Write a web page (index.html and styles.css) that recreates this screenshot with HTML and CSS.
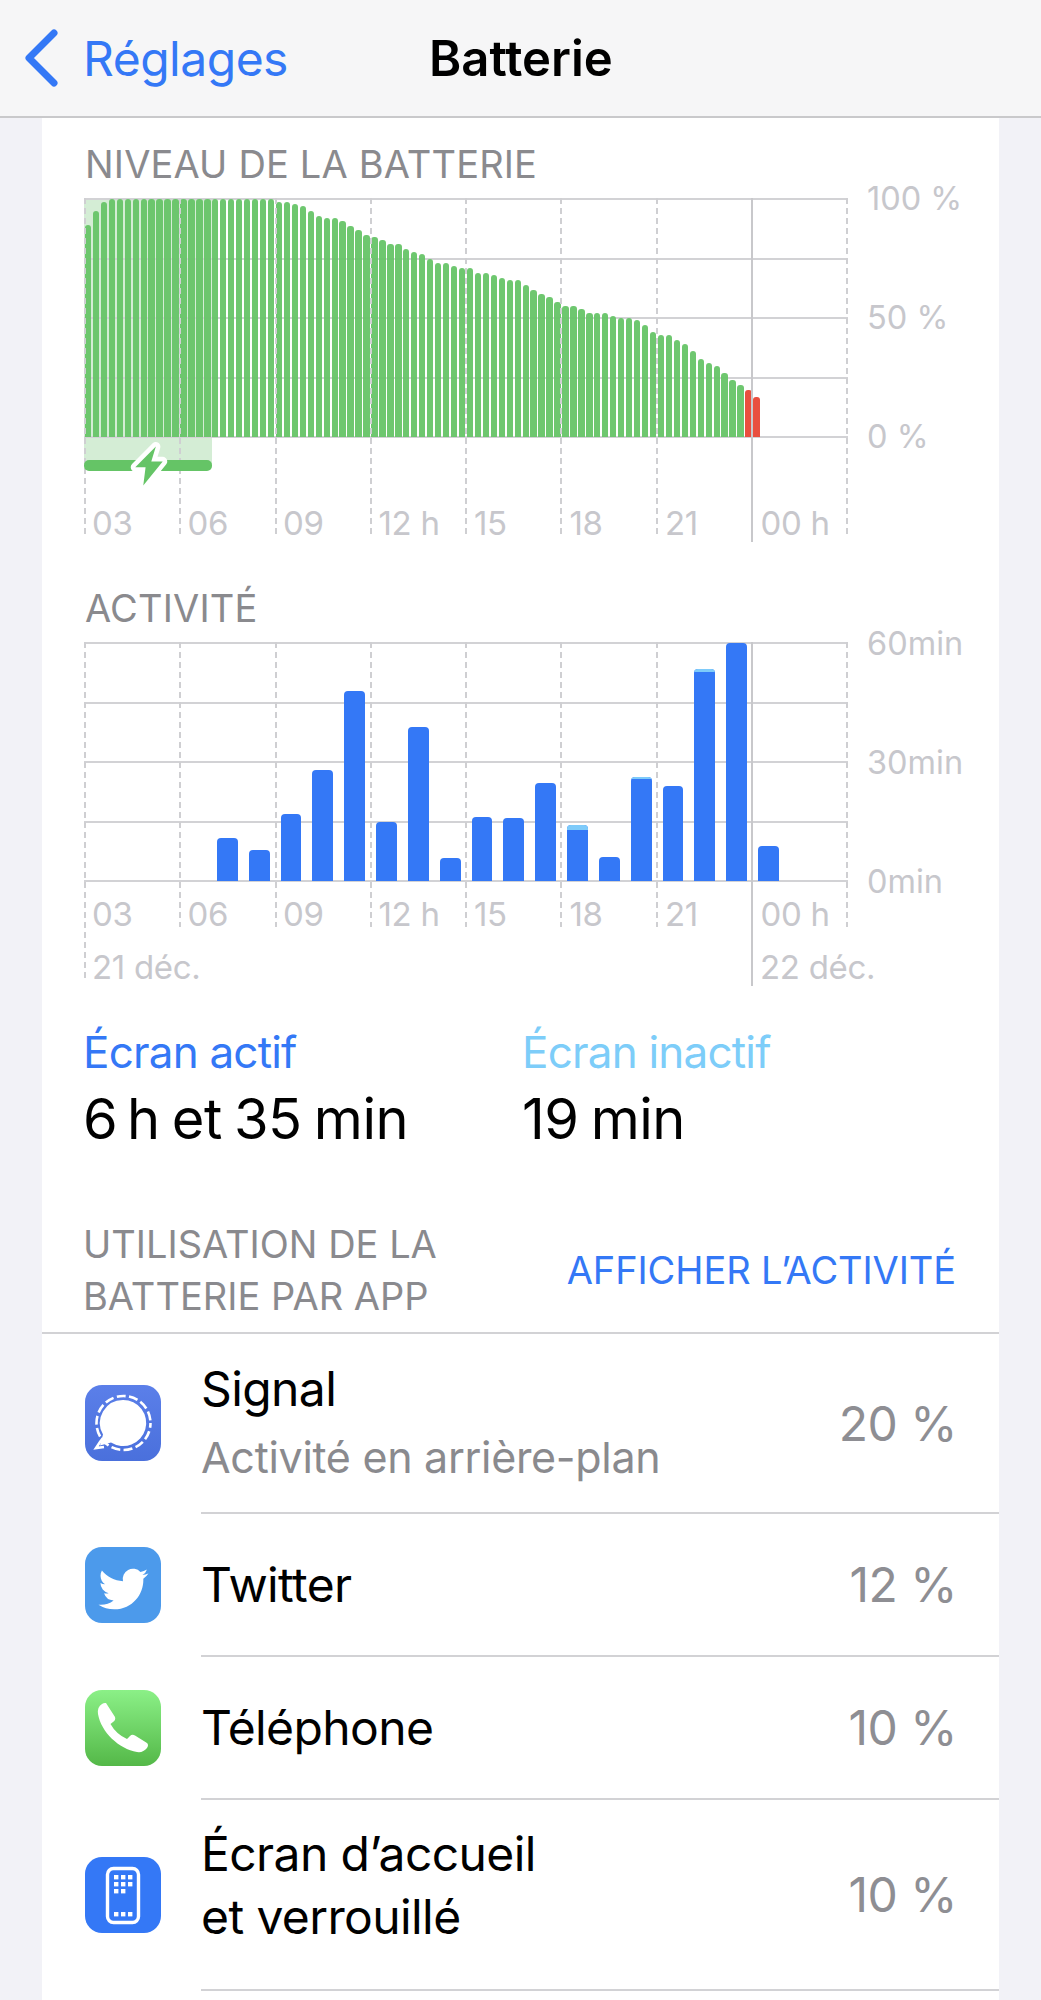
FILE: index.html
```html
<!DOCTYPE html>
<html lang="fr">
<head>
    <meta charset="UTF-8">
    <title>Batterie</title>
    <link rel="stylesheet" href="styles.css">
</head>
<body>
    <div class="nav">
        <div class="nav-back">
            <svg class="chevron" viewBox="0 0 34 58"><path d="M30 4 L5 29 L30 54"/></svg>
            <span>Réglages</span>
        </div>
        <div class="nav-title">Batterie</div>
    </div>
    <div class="card">
        <h3 class="sec-title">NIVEAU DE LA BATTERIE</h3>
        <div class="chart-row">
            <div class="chart chart-level">
                <div class="charge-bg"></div>
                <div class="hlines">
                    <i></i><i></i><i></i><i></i><i></i>
                </div>
                <div class="bars" id="levelBars"></div>
                <div class="vlines">
                    <i></i><i></i><i></i><i></i><i></i><i></i><i></i><i class="solid"></i><i></i>
                </div>
                <div class="charge-bar"></div>
                <svg class="bolt" viewBox="0 0 40 56"><path d="M26 11 L8 29 L17 29 L15 45 L32 24 L22 24 Z"/></svg>
                <div class="hours hours-level">
                    <span>03</span><span>06</span><span>09</span><span>12 h</span><span>15</span><span>18</span><span>21</span><span>00 h</span>
                </div>
            </div>
            <div class="axis">
                <span>100 %</span>
                <span>50 %</span>
                <span>0 %</span>
            </div>
        </div>

        <h3 class="sec-title sec-activity">ACTIVITÉ</h3>
        <div class="chart-row">
            <div class="chart chart-activity">
                <div class="hlines">
                    <i></i><i></i><i></i><i></i><i></i>
                </div>
                <div class="vlines">
                    <i class="first"></i><i></i><i></i><i></i><i></i><i></i><i></i><i class="solid"></i><i></i>
                </div>
                <div class="bars bars-activity" id="activityBars"></div>
                <div class="hours hours-activity">
                    <span>03</span><span>06</span><span>09</span><span>12 h</span><span>15</span><span>18</span><span>21</span><span>00 h</span>
                </div>
                <div class="dates">
                    <span>21 déc.</span>
                    <span>22 déc.</span>
                </div>
            </div>
            <div class="axis axis-activity">
                <span>60min</span>
                <span>30min</span>
                <span>0min</span>
            </div>
        </div>

        <div class="stats">
            <div>
                <div class="stat-label">Écran actif</div>
                <div class="stat-value">6&#8239;h et 35 min</div>
            </div>
            <div>
                <div class="stat-label stat-inactive">Écran inactif</div>
                <div class="stat-value">19 min</div>
            </div>
        </div>

        <div class="usage-head">
            <h3 class="sec-title usage-title">UTILISATION DE LA<br>BATTERIE PAR APP</h3>
            <div class="usage-link">AFFICHER L’ACTIVITÉ</div>
        </div>

        <ul class="apps">
            <li class="app app-signal">
                <svg class="icon" viewBox="0 0 76 76">
                    <defs><linearGradient id="gs" x1="0" y1="0" x2="0" y2="1"><stop offset="0" stop-color="#5b7fe9"/><stop offset="1" stop-color="#4a70dc"/></linearGradient></defs>
                    <rect width="76" height="76" rx="17" fill="url(#gs)"/>
                    <path d="M38 15 A23 23 0 1 1 26 57.5 L15 60.5 L18 49.5 A23 23 0 0 1 38 15 Z" fill="#fff"/>
                    <circle cx="38.5" cy="38" r="27" fill="none" stroke="#fff" stroke-width="2.6" stroke-dasharray="9 3.4" stroke-dashoffset="4"/>
                    <path d="M18 53 L15 57 L11 63 L19 62" fill="none" stroke="#fff" stroke-width="2.6"/>
                </svg>
                <div class="app-body">
                    <div class="app-text">
                        <div class="app-name">Signal</div>
                        <div class="app-sub">Activité en arrière-plan</div>
                    </div>
                    <div class="app-pct">20 %</div>
                </div>
            </li>
            <li class="app">
                <svg class="icon" viewBox="0 0 76 76">
                    <rect width="76" height="76" rx="17" fill="#4c9aeb"/>
                    <path transform="translate(13.5 17) scale(2.08)" fill="#fff" d="M23.953 4.57a10 10 0 01-2.825.775 4.958 4.958 0 002.163-2.723c-.951.555-2.005.959-3.127 1.184a4.92 4.92 0 00-8.384 4.482C7.69 8.095 4.067 6.13 1.64 3.162a4.822 4.822 0 00-.666 2.475c0 1.71.87 3.213 2.188 4.096a4.904 4.904 0 01-2.228-.616v.06a4.923 4.923 0 003.946 4.827 4.996 4.996 0 01-2.212.085 4.936 4.936 0 004.604 3.417 9.867 9.867 0 01-6.102 2.105c-.39 0-.779-.023-1.17-.067a13.995 13.995 0 007.557 2.209c9.053 0 13.998-7.496 13.998-13.985 0-.21 0-.42-.015-.63A9.935 9.935 0 0024 4.59z"/>
                </svg>
                <div class="app-body">
                    <div class="app-text"><div class="app-name">Twitter</div></div>
                    <div class="app-pct">12 %</div>
                </div>
            </li>
            <li class="app">
                <svg class="icon" viewBox="0 0 76 76">
                    <defs><linearGradient id="gp" x1="0" y1="0" x2="0" y2="1"><stop offset="0" stop-color="#8bf087"/><stop offset="1" stop-color="#54b848"/></linearGradient></defs>
                    <rect width="76" height="76" rx="17" fill="url(#gp)"/>
                    <path fill="#fff" d="M21 13 L30 27 Q31 30 28 32 L25.5 34 Q31 44 42 49 L45 46 Q47 44 50 45.5 L62 53 Q64 55 62 58 Q58 63 52 62 C34 59 16 42 13 24 Q12 17 17 14 Q19 12.5 21 13 Z"/>
                </svg>
                <div class="app-body">
                    <div class="app-text"><div class="app-name">Téléphone</div></div>
                    <div class="app-pct">10 %</div>
                </div>
            </li>
            <li class="app app-home">
                <svg class="icon" viewBox="0 0 76 76">
                    <rect width="76" height="76" rx="17" fill="#3478f6"/>
                    <rect x="22.5" y="11.5" width="31" height="54" rx="6" fill="none" stroke="#fff" stroke-width="3.4"/>
                    <g fill="#fff">
                        <rect x="29" y="18" width="4.4" height="4.4"/><rect x="36" y="18" width="4.4" height="4.4"/><rect x="43" y="18" width="4.4" height="4.4"/>
                        <rect x="29" y="25" width="4.4" height="4.4"/><rect x="36" y="25" width="4.4" height="4.4"/><rect x="43" y="25" width="4.4" height="4.4"/>
                        <rect x="29" y="32" width="4.4" height="4.4"/><rect x="36" y="32" width="4.4" height="4.4"/>
                        <rect x="29" y="55" width="4.4" height="4.4"/><rect x="36" y="55" width="4.4" height="4.4"/><rect x="43" y="55" width="4.4" height="4.4"/>
                    </g>
                </svg>
                <div class="app-body">
                    <div class="app-text"><div class="app-name">Écran d’accueil<br>et verrouillé</div></div>
                    <div class="app-pct">10 %</div>
                </div>
            </li>
        </ul>
    </div>
    <script src="chart.js"></script>
</body>
</html>
```

FILE: styles.css
```css
*{
    margin: 0;
    padding: 0;
    box-sizing: border-box;
}
body{
    background: #f2f2f7;
    font-family: Inter, "Liberation Sans", sans-serif;
    height: 2000px;
    overflow: hidden;
}
.nav{
    height: 118px;
    background: #f6f6f7;
    border-bottom: 2px solid #c9c9cb;
    display: grid;
    grid-template-columns: 429px auto;
    align-items: center;
}
.nav-back{
    display: flex;
    align-items: center;
    color: #3478f6;
    font-size: 48px;
    letter-spacing: -0.5px;
    padding-left: 24px;
}
.chevron{
    width: 34px;
    height: 58px;
    margin-right: 25px;
}
.chevron path{
    fill: none;
    stroke: #3478f6;
    stroke-width: 7;
    stroke-linecap: round;
    stroke-linejoin: round;
}
.nav-title{
    font-size: 49px;
    font-weight: 600;
    color: #000;
}
.card{
    margin: 0 42px;
    width: 957px;
    height: 1882px;
    background: #fff;
    padding-top: 24px;
}
.sec-title{
    font-size: 38px;
    line-height: 44px;
    font-weight: 400;
    color: #8a8a8e;
    margin-left: 43px;
    letter-spacing: 0.15px;
}
.chart-row{
    display: flex;
    margin-left: 42px;
    margin-top: 12px;
}
.chart{
    position: relative;
    width: 764px;
    flex: none;
}
.chart-level{
    height: 340px;
}
.chart-activity{
    height: 285px;
}
.hlines{
    position: absolute;
    top: 0;
    left: 0;
    right: 0;
    height: 240px;
    display: flex;
    flex-direction: column;
    justify-content: space-between;
}
.hlines i{
    display: block;
    height: 2px;
    background: #d2d2d5;
}
.vlines{
    position: absolute;
    top: 0;
    left: 0;
    right: 0;
    bottom: 0;
    display: flex;
    justify-content: space-between;
}
.vlines i{
    display: block;
    width: 2px;
    height: 100%;
    background: repeating-linear-gradient(to bottom, #cfcfd2 0, #cfcfd2 6px, transparent 6px, transparent 10px);
}
.vlines i.solid{
    background: #c8c8cb;
    height: calc(100% + 4px);
}
.chart-activity .vlines i.solid{
    height: calc(100% + 59px);
}
.chart-activity .vlines i.first{
    height: calc(100% + 54px);
}
.bars{
    position: absolute;
    top: 0;
    left: 0;
    right: 0;
    height: 239px;
    display: grid;
    grid-template-columns: repeat(96, 1fr);
    align-items: end;
}
.bars div{
    background: #65c466;
    margin: 0 .8px;
    border-radius: 3px 3px 0 0;
    opacity: .94;
}
.bars div.low{
    background: #e94f3f;
    opacity: 1;
}
.bars-activity{
    grid-template-columns: repeat(24, 1fr);
}
.bars-activity div{
    background: #3478f6;
    margin: 0 5.5px;
    border-radius: 4px 4px 0 0;
    overflow: hidden;
    opacity: 1;
}
.bars-activity div span{
    display: block;
    background: #7ecbfa;
}
.charge-bg{
    position: absolute;
    left: 0;
    top: 0;
    width: 128px;
    height: 266px;
    background: #d4edd5;
}
.charge-bar{
    position: absolute;
    left: 0;
    top: 262px;
    width: 128px;
    height: 11px;
    border-radius: 5px;
    background: #65c466;
}
.bolt{
    position: absolute;
    left: 42px;
    top: 236px;
    width: 46px;
    height: 64px;
}
.bolt path{
    fill: #65c466;
    stroke: #fff;
    stroke-width: 8;
    stroke-linejoin: round;
    paint-order: stroke;
}
.hours{
    position: absolute;
    left: 0;
    right: 0;
    display: grid;
    grid-template-columns: repeat(8, 1fr);
    font-size: 33px;
    line-height: 40px;
    color: #c7c7cc;
    letter-spacing: -0.3px;
    white-space: nowrap;
}
.hours span{
    padding-left: 8px;
}
.hours-level{
    top: 305px;
}
.hours-activity{
    top: 252px;
}
.dates{
    position: absolute;
    left: 8px;
    right: -30px;
    top: 305px;
    display: grid;
    grid-template-columns: 668px auto;
    font-size: 33px;
    line-height: 40px;
    color: #c7c7cc;
    letter-spacing: -0.3px;
    white-space: nowrap;
}
.axis{
    height: 278px;
    margin-top: -19px;
    margin-left: 19px;
    display: flex;
    flex-direction: column;
    justify-content: space-between;
    font-size: 32.5px;
    line-height: 40px;
    color: #c7c7cc;
    white-space: nowrap;
}
.axis-activity{
    margin-top: -18px;
}
.sec-activity{
    margin-top: 48px;
}
.stats{
    display: grid;
    grid-template-columns: 439px 1fr;
    margin: 97px 0 0 41px;
}
.stat-label{
    font-size: 44px;
    line-height: 56px;
    color: #3478f6;
    letter-spacing: -0.8px;
}
.stat-inactive{
    color: #7dcdf9;
}
.stat-value{
    font-size: 56px;
    line-height: 66px;
    margin-top: 6px;
    color: #000;
    letter-spacing: -0.5px;
    word-spacing: -3px;
}
.usage-head{
    display: flex;
    justify-content: space-between;
    align-items: center;
    margin-top: 66px;
    padding-right: 43px;
}
.usage-title{
    line-height: 52px;
    margin-left: 41px;
    letter-spacing: 0;
}
.usage-link{
    font-size: 38px;
    color: #3478f6;
    letter-spacing: -0.1px;
}
.apps{
    list-style: none;
    margin-top: 10px;
    border-top: 2px solid #d2d2d5;
}
.app{
    display: flex;
    align-items: center;
    padding-left: 43px;
    height: 143px;
}
.app-signal{
    height: 180px;
}
.app-home{
    height: 191px;
}
.icon{
    width: 76px;
    height: 76px;
    flex: none;
    margin-right: 40px;
    margin-bottom: 2px;
}
.app-body{
    flex: 1;
    height: 100%;
    display: flex;
    align-items: center;
    justify-content: space-between;
    border-bottom: 2px solid #d2d2d5;
    padding-right: 42px;
}
.app-name{
    font-size: 48px;
    line-height: 65px;
    color: #000;
    letter-spacing: -0.6px;
}
.app-signal .app-text{
    margin-bottom: 8.5px;
}
.app-home .app-text{
    margin-bottom: 19px;
}
.app-home .app-name{
    line-height: 63px;
}
.app-sub{
    font-size: 43px;
    line-height: 50px;
    margin-top: 10.5px;
    color: #8a8a8e;
    letter-spacing: -0.3px;
}
.app-pct{
    font-size: 48px;
    color: #8e8e93;
    letter-spacing: -0.5px;
}
```

FILE: chart.js
```js
// bar heights read off the picture, in px
var level = [212, 226, 235];
for (var k = 0; k < 21; k++) {
    level.push(238);
}
level = level.concat([235.4, 235.4, 233, 230.7, 226, 221, 218.7, 218.7, 216.4, 211.4, 206.7, 202, 199.7, 197.4, 192.7, 192.7,
    187.7, 185.4, 183, 178.4, 173.7, 173.7, 171, 168.7, 168.7, 164, 164, 161.7, 159.4, 156.7, 156.7, 152,
    147.4, 142.7, 140.4, 135.4, 130.7, 130.7, 128.4, 123.7, 123.7, 123.7, 121.4, 119, 119, 116.7, 111.7,
    104.7, 102, 102, 97.4, 92.7, 85.7, 78.4, 73.7, 71.4, 64, 57, 52, 47.4, 40.4]);

var levelBox = document.getElementById("levelBars");
for (var i = 0; i < level.length; i++) {
    var bar = document.createElement("div");
    bar.style.height = level[i] + "px";
    if (i >= 83) {
        bar.className = "low";
    }
    levelBox.appendChild(bar);
}

// [hour slot, height, light part on top]
var activity = [[4, 42.7, 0], [5, 31.3, 0], [6, 66.7, 0], [7, 110.7, 0], [8, 190, 0], [9, 58.7, 0], [10, 154, 0], [11, 23.3, 0],
    [12, 63.7, 0], [13, 63, 0], [14, 98.3, 0], [15, 55.7, 5], [16, 23.7, 0], [17, 104.3, 2], [18, 94.7, 0], [19, 212.3, 3],
    [20, 238.3, 0], [21, 34.7, 0]];

var activityBox = document.getElementById("activityBars");
for (var j = 0; j < activity.length; j++) {
    var col = document.createElement("div");
    col.style.gridColumn = activity[j][0] + 1;
    col.style.height = activity[j][1] + "px";
    if (activity[j][2] > 0) {
        var light = document.createElement("span");
        light.style.height = activity[j][2] + "px";
        col.appendChild(light);
    }
    activityBox.appendChild(col);
}
```
